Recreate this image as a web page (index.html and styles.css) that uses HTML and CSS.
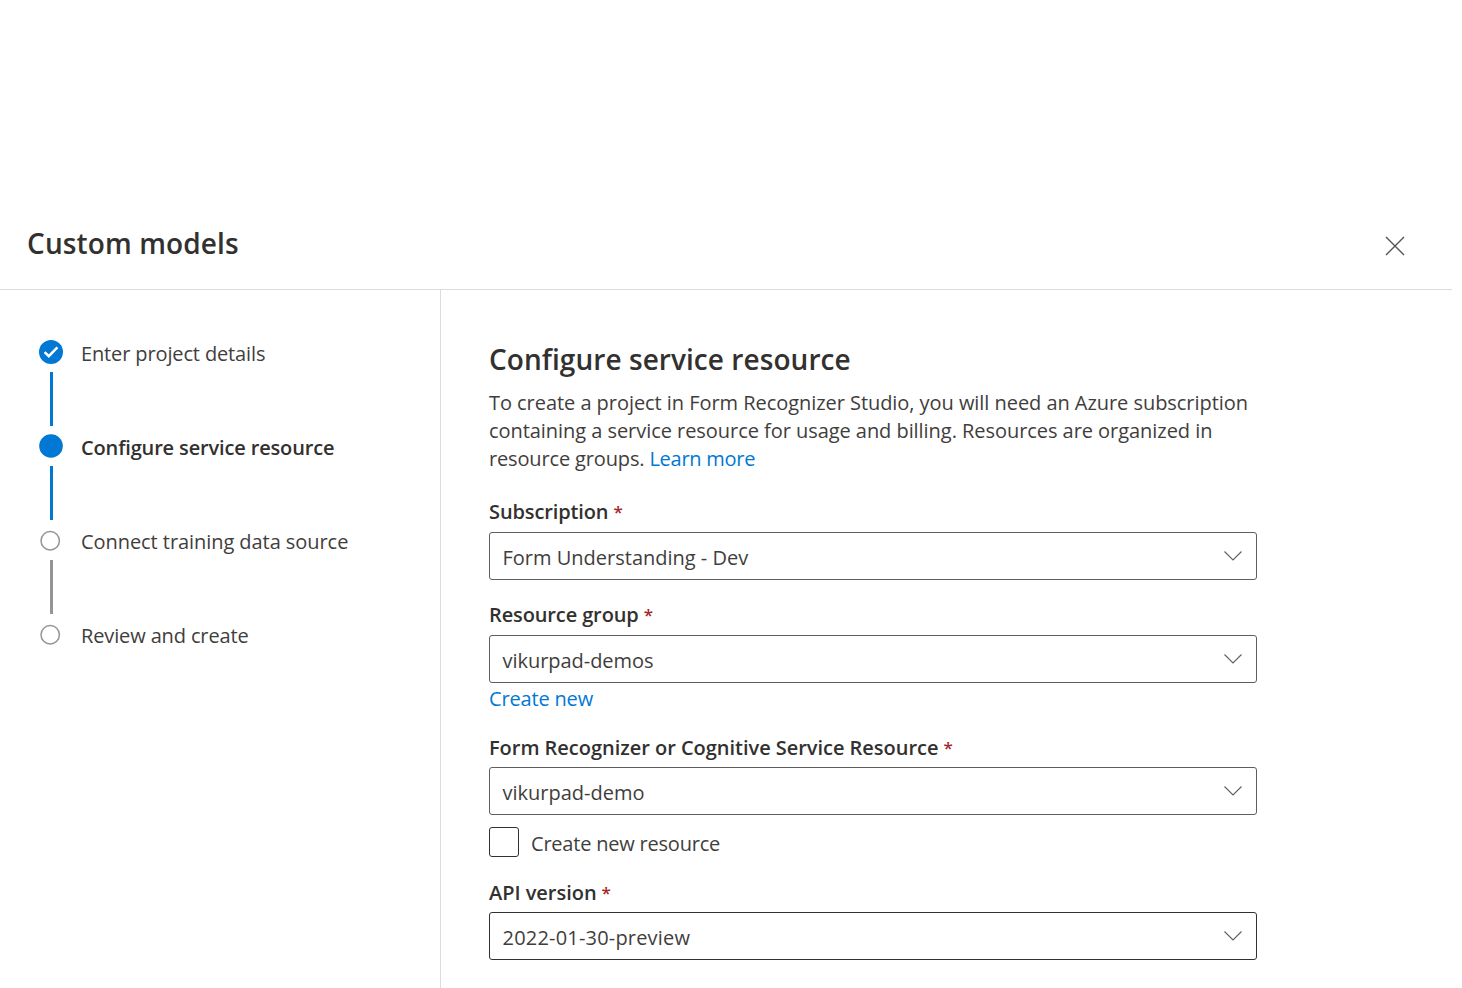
FILE: index.html
```html
<!DOCTYPE html>
<html lang="en">
<head>
<meta charset="utf-8">
<title>Custom models</title>
<link rel="stylesheet" href="styles.css">
</head>
<body>
<div class="dialog">
  <header class="dialog-header">
    <h1 class="dialog-title"><span class="t-title">Custom models</span></h1>
    <button class="close" aria-label="Close"><svg width="20" height="20" viewBox="0 0 20 20"><path d="M1 1L19 19M19 1L1 19"/></svg></button>
  </header>
  <div class="dialog-body">
    <nav class="steps">
      <div class="step">
        <div class="step-mark"><svg class="dot" width="24" height="24" viewBox="0 0 24 24"><circle cx="12" cy="12" r="12" fill="#0078d4"/><path d="M5.6 12.2L9.8 16.2L18.4 7.4" fill="none" stroke="#fff" stroke-width="2.5"/></svg><span class="line"></span></div>
        <span class="step-label t-s1">Enter project details</span>
      </div>
      <div class="step">
        <div class="step-mark"><svg class="dot" width="24" height="24" viewBox="0 0 24 24"><circle cx="12" cy="12" r="11.8" fill="#0078d4"/></svg><span class="line"></span></div>
        <span class="step-label current t-s2">Configure service resource</span>
      </div>
      <div class="step">
        <div class="step-mark"><svg class="dot" width="24" height="24" viewBox="0 0 24 24"><circle cx="11.2" cy="12.8" r="9.2" fill="none" stroke="#979593" stroke-width="1.5"/></svg><span class="line pending"></span></div>
        <span class="step-label t-s3">Connect training data source</span>
      </div>
      <div class="step">
        <div class="step-mark"><svg class="dot" width="24" height="24" viewBox="0 0 24 24"><circle cx="11.2" cy="12.8" r="9.2" fill="none" stroke="#979593" stroke-width="1.5"/></svg></div>
        <span class="step-label t-s4">Review and create</span>
      </div>
    </nav>
    <main class="form">
      <h2 class="form-title"><span class="t-head">Configure service resource</span></h2>
      <p class="intro"><span class="t-p1">To create a project in Form Recognizer Studio, you will need an Azure subscription</span><br><span class="t-p1">containing a service resource for usage and billing. Resources are organized in</span><br><span class="t-p3">resource groups. </span><a class="link t-learn">Learn more</a></p>

      <div class="field">
        <label class="label"><span class="t-l1">Subscription</span><span class="required">*</span></label>
        <div class="select"><span>Form Understanding - Dev</span><svg width="18" height="10" viewBox="0 0 18 10"><path d="M.5 .5L9 9L17.5 .5"/></svg></div>
      </div>

      <div class="field">
        <label class="label"><span class="t-l1">Resource group</span><span class="required">*</span></label>
        <div class="select"><span class="t-v2">vikurpad-demos</span><svg width="18" height="10" viewBox="0 0 18 10"><path d="M.5 .5L9 9L17.5 .5"/></svg></div>
        <a class="link create">Create new</a>
      </div>

      <div class="field">
        <label class="label low"><span class="t-l3">Form Recognizer or Cognitive Service Resource</span><span class="required">*</span></label>
        <div class="select"><span>vikurpad-demo</span><svg width="18" height="10" viewBox="0 0 18 10"><path d="M.5 .5L9 9L17.5 .5"/></svg></div>
        <div class="check"><span class="box"></span><span class="t-check">Create new resource</span></div>
      </div>

      <div class="field">
        <label class="label low"><span class="t-l4">API version</span><span class="required">*</span></label>
        <div class="select active"><span class="t-v4">2022-01-30-preview</span><svg width="18" height="10" viewBox="0 0 18 10"><path d="M.5 .5L9 9L17.5 .5"/></svg></div>
      </div>
    </main>
  </div>
</div>
</body>
</html>
```

FILE: styles.css
```css
* { box-sizing: border-box; }
body {
  margin: 0;
  height: 988px;
  overflow: hidden;
  background: #fff;
  color: #3f3e3d;
  font: 20px/28px "Open Sans", "Noto Sans", sans-serif;
}
.dialog { width: 1452px; height: 988px; padding-top: 198px; display: flex; flex-direction: column; }
.dialog-header {
  height: 92px;
  flex: none;
  display: flex;
  align-items: center;
  justify-content: space-between;
  padding: 0 47px 0 27px;
  border-bottom: 1px solid #dcdcdc;
}
.dialog-title, .form-title { margin: 0; font-size: 28px; line-height: 40px; font-weight: 600; color: #323130; }
.dialog-title { padding-bottom: 2px; }
.form-title { line-height: 38px; }
.close { border: 0; background: none; padding: 5px 0 0; width: 20px; height: 25px; }
.close svg { display: block; fill: none; stroke: #55534f; stroke-width: 1.4; }
.dialog-body { flex: 1; min-height: 0; display: flex; }
.steps { width: 441px; flex: none; border-right: 1px solid #dcdcdc; padding: 50px 0 0 39px; }
.step { height: 94px; display: flex; gap: 18px; }
.step-mark { width: 24px; display: flex; flex-direction: column; gap: 8px; }
.dot { display: block; flex: none; }
.line { width: 3px; height: 54px; margin-left: 11px; background: #0078d4; }
.line.pending { background: #979593; }
.step-label { white-space: nowrap; }
.current { font-weight: 600; color: #323130; }
.form { width: 816px; padding: 50px 0 0 48px; white-space: nowrap; }
.intro { margin: 11px 0 0; }
.link { color: #0078d4; }
.field { margin-top: 21px; }
.field + .field { margin-top: 17px; }
.label { display: flex; gap: 5px; height: 38px; line-height: 36px; font-weight: 600; color: #323130; }
.label.low { line-height: 38px; }
.required { color: #a4262c; font-weight: 600; font-size: 17px; }
.select {
  height: 48px;
  border: 1px solid #605e5c;
  border-radius: 3px;
  padding: 4px 14px 0 12.5px;
  display: flex;
  align-items: center;
  justify-content: space-between;
}
.select svg { fill: none; stroke: #605e5c; stroke-width: 1.1; margin-top: -4px; }
.active { border-color: #323130; }
.create { display: block; margin-top: 2px; height: 27px; letter-spacing: -.17px; }
.check { display: flex; gap: 12px; margin-top: 12px; height: 30px; line-height: 34px; }
.box { width: 30px; height: 30px; border: 1px solid #323130; border-radius: 3px; }

/* Tracking per text run */
.t-title { letter-spacing: .13px; }
.t-head { letter-spacing: .06px; }
.t-s1 { letter-spacing: -.13px; }
.t-s2 { letter-spacing: -.15px; }
.t-s3 { letter-spacing: -.06px; }
.t-s4 { letter-spacing: -.13px; }
.t-p1 { letter-spacing: -.05px; }
.t-p3 { letter-spacing: -.15px; }
.t-learn { letter-spacing: -.27px; }
.t-l1 { letter-spacing: -.12px; }
.t-l3 { letter-spacing: -.03px; }
.t-l4 { letter-spacing: -.03px; }
.t-v2 { letter-spacing: -.04px; }
.t-v4 { letter-spacing: .19px; }
.t-check { letter-spacing: -.21px; }
```
